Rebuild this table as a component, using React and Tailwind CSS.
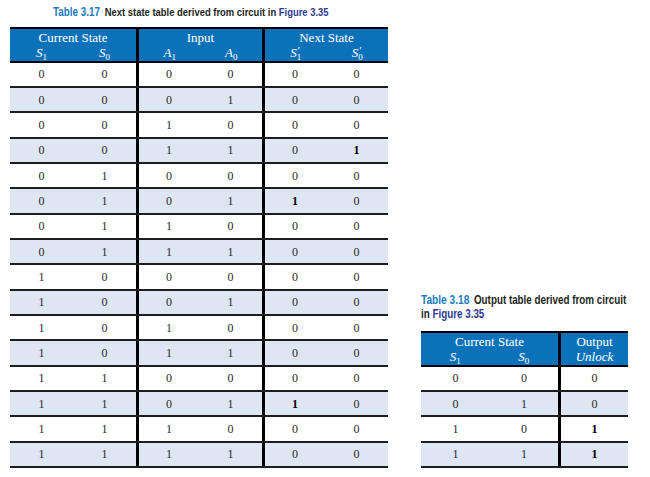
import React from 'react';

// --- datos de las tablas ---
const nextStateRows = [
  [0, 0, 0, 0, 0, 0],
  [0, 0, 0, 1, 0, 0],
  [0, 0, 1, 0, 0, 0],
  [0, 0, 1, 1, 0, 1],
  [0, 1, 0, 0, 0, 0],
  [0, 1, 0, 1, 1, 0],
  [0, 1, 1, 0, 0, 0],
  [0, 1, 1, 1, 0, 0],
  [1, 0, 0, 0, 0, 0],
  [1, 0, 0, 1, 0, 0],
  [1, 0, 1, 0, 0, 0],
  [1, 0, 1, 1, 0, 0],
  [1, 1, 0, 0, 0, 0],
  [1, 1, 0, 1, 1, 0],
  [1, 1, 1, 0, 0, 0],
  [1, 1, 1, 1, 0, 0],
];

const outputRows = [
  [0, 0, 0],
  [0, 1, 0],
  [1, 0, 1],
  [1, 1, 1],
];

const titleFont = { fontFamily: '"Liberation Sans", Arial, sans-serif' };
const serif = { fontFamily: '"Liberation Serif", "Times New Roman", serif' };

const Sym = ({ letter, sub, prime }) => (
  <span className="italic">
    {letter}
    {prime ? (
      <span className="inline-flex flex-col not-italic leading-[7px] relative -top-[3px] align-baseline">
        <span className="text-[11px]">′</span>
        <span className="text-[9px]">{sub}</span>
      </span>
    ) : (
      <span className="relative not-italic text-[9px] top-[3px]">{sub}</span>
    )}
  </span>
);

const Fig = () => <span className="text-[#2d3a94]">Figure 3.35</span>;

const App = () => {
  return (
    <div className="w-[650px] h-[477px] bg-white flex items-end pl-[10px] pb-[9px] gap-[33px] overflow-hidden" style={serif}>
      {/* Table 3.17 */}
      <div className="w-[378px] flex flex-col">
        <div className="h-[14px] mb-[8px]">
          <p
            className="ml-[43px] w-[380px] whitespace-nowrap text-[11.5px] font-bold leading-[14px] text-[#231f20] scale-x-[0.82] origin-left"
            style={titleFont}
          >
            <span className="text-[#1b7bc2] text-[12px] mr-[6px]">Table 3.17</span>
            Next state table derived from circuit in <Fig />
          </p>
        </div>
        <div className="border-t-2 border-b-2 border-black bg-[#0b72ba] text-white text-[13px] leading-[15px] flex h-[36px]">
          {[
            ['Current State', ['S', '1', false], ['S', '0', false]],
            ['Input', ['A', '1', false], ['A', '0', false]],
            ['Next State', ['S', '1', true], ['S', '0', true]],
          ].map(([label, a, b], i) => (
            <div key={label} className={`w-[126px] flex flex-col pt-[1px] ${i > 0 ? 'border-l-[3px] border-black' : ''}`}>
              <div className="text-center">{label}</div>
              <div className="flex">
                <div className="flex-1 text-center"><Sym letter={a[0]} sub={a[1]} prime={a[2]} /></div>
                <div className="flex-1 text-center"><Sym letter={b[0]} sub={b[1]} prime={b[2]} /></div>
              </div>
            </div>
          ))}
        </div>
        {nextStateRows.map((row, r) => (
          <div
            key={r}
            className={`flex h-[25.33px] border-b-2 border-[#1e1e1e] text-[12px] text-[#2a2a2a] ${r % 2 ? 'bg-[#dee5f3]' : 'bg-white'}`}
          >
            {row.map((v, c) => {
              const bold = (r === 3 && c === 5) || ((r === 5 || r === 13) && c === 4);
              return (
                <div
                  key={c}
                  className={`w-[63px] flex items-center justify-center ${c === 2 || c === 4 ? 'border-l-[3px] border-black' : ''} ${bold ? 'font-bold text-black' : ''}`}
                >
                  {v}
                </div>
              );
            })}
          </div>
        ))}
      </div>

      {/* Table 3.18 */}
      <div className="w-[207px] flex flex-col">
        <div className="h-[28px] mb-[10px]">
          <p
            className="w-[265px] whitespace-nowrap text-[12.6px] font-bold leading-[14px] text-[#231f20] scale-x-[0.78] origin-left"
            style={titleFont}
          >
            <span className="text-[#1b7bc2] text-[13px] mr-[6px]">Table 3.18</span>
            Output table derived from circuit
            <br />
            in <Fig />
          </p>
        </div>
        <div className="border-t-2 border-b-2 border-black bg-[#0b72ba] text-white text-[13px] leading-[15px] flex h-[36px]">
          <div className="w-[137px] flex flex-col pt-[1px]">
            <div className="text-center">Current State</div>
            <div className="flex">
              <div className="flex-1 text-center"><Sym letter="S" sub="1" /></div>
              <div className="flex-1 text-center"><Sym letter="S" sub="0" /></div>
            </div>
          </div>
          <div className="w-[70px] flex flex-col pt-[1px] border-l-[3px] border-black">
            <div className="text-center">Output</div>
            <div className="text-center italic">Unlock</div>
          </div>
        </div>
        {outputRows.map((row, r) => (
          <div
            key={r}
            className={`flex h-[25.33px] border-b-2 border-[#1e1e1e] text-[12px] text-[#2a2a2a] ${r % 2 ? 'bg-[#dee5f3]' : 'bg-white'}`}
          >
            <div className="w-[69px] flex items-center justify-center">{row[0]}</div>
            <div className="w-[68px] flex items-center justify-center">{row[1]}</div>
            <div className={`w-[70px] flex items-center justify-center border-l-[3px] border-black ${row[2] ? 'font-bold text-black' : ''}`}>
              {row[2]}
            </div>
          </div>
        ))}
      </div>
    </div>
  );
};

export default App;
